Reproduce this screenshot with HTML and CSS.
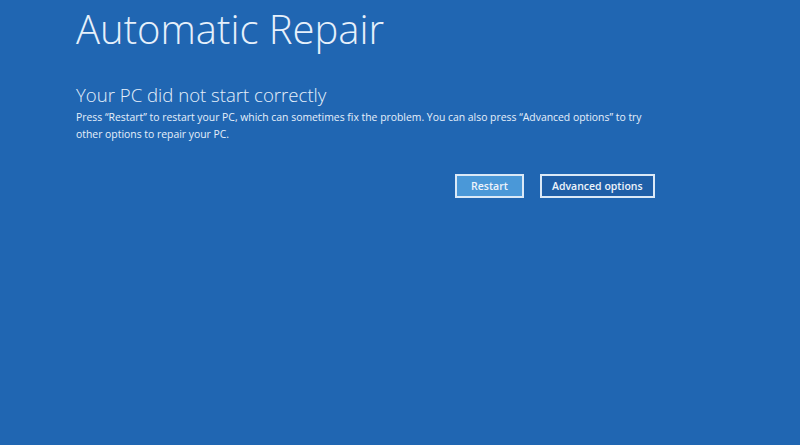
FILE: index.html
```html
<!DOCTYPE html>
<html lang="en">
<head>
    <meta charset="UTF-8">
    <title>Automatic Repair</title>
    <link rel="stylesheet" href="styles.css">
</head>
<body>
    <div class="screen">
        <h1 class="title">Automatic Repair</h1>
        <h2 class="subtitle">Your PC did not start correctly</h2>
        <p class="msg">Press “Restart” to restart your PC, which can sometimes fix the problem. You can also press “Advanced options” to try other options to repair your PC.</p>
        <div class="actions">
            <button class="btn primary">Restart</button>
            <button class="btn">Advanced options</button>
        </div>
    </div>
</body>
</html>
```

FILE: styles.css
```css
body{
    margin: 0;
    background: #2066b2;
    height: 445px;
    overflow: hidden;
}
.screen{
    padding: 5px 0 0 76px;
    color: #e6f0fb;
    font-family: "Open Sans", "Noto Sans", sans-serif;
}
.title{
    margin: 0;
    font-size: 40px;
    font-weight: 300;
    line-height: 48px;
}
.subtitle{
    margin: 30px 0 0;
    font-size: 18.6px;
    font-weight: 300;
    line-height: 24px;
}
.msg{
    margin: 2px 0 0;
    width: 580px;
    font-size: 10.4px;
    line-height: 17px;
}
.actions{
    display: flex;
    gap: 16px;
    margin: 31px 0 0 379px;
}
.btn{
    height: 24px;
    padding: 0 10px;
    border: 2px solid #dbe9f7;
    background: #1f5fa8;
    color: #eef4fb;
    font-family: "Open Sans", sans-serif;
    font-size: 10.5px;
    font-weight: 600;
}
.primary{
    width: 69px;
    background: #4a98d8;
}
```
